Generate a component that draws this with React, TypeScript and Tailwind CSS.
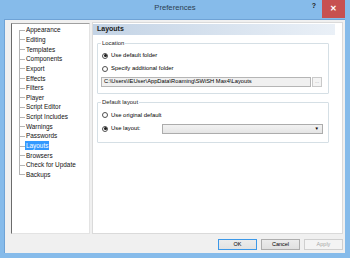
import React from "react";

const items = [
  "Appearance",
  "Editing",
  "Templates",
  "Components",
  "Export",
  "Effects",
  "Filters",
  "Player",
  "Script Editor",
  "Script Includes",
  "Warnings",
  "Passwords",
  "Layouts",
  "Browsers",
  "Check for Update",
  "Backups",
];

function Radio({ checked }: { checked?: boolean }) {
  return (
    <span className="w-[6px] h-[6px] rounded-full border border-[#505050] bg-white flex items-center justify-center shrink-0">
      {checked && <span className="w-[3px] h-[3px] rounded-full bg-[#1a1a1a]" />}
    </span>
  );
}

export default function App() {
  return (
    <div className="w-[350px] h-[258px] bg-[#86bbea] flex flex-col overflow-hidden font-['Liberation_Sans',Arial,sans-serif] text-black">
      {/* title bar */}
      <div className="h-[19px] grid grid-cols-[1fr_auto_1fr] items-start shrink-0">
        <div />
        <div className="pt-[3px] text-[7.7px] leading-[10px] text-[#2c3e50]">Preferences</div>
        <div className="flex justify-end items-start pr-[5px]">
          <span className="mt-[2px] mr-[6px] text-[7px] leading-[8px] font-bold text-[#222]">?</span>
          <div className="w-[23px] h-[18px] bg-[#c75050] flex items-center justify-center text-white text-[8px] leading-[8px] font-bold">
            ✕
          </div>
        </div>
      </div>

      {/* client area */}
      <div className="ml-[4px] mr-[5px] mb-[5px] flex-1 bg-[#f0f0f0] flex flex-col border-t border-l border-[#6fa3d6]">
        <div className="flex items-end h-[214px]">
          {/* tree */}
          <div className="ml-[6px] w-[79px] h-[211px] bg-white border-t border-l border-t-[#a0a0a0] border-l-[#6b6b6b] border-r border-b border-r-[#e3e3e3] border-b-[#e3e3e3] pt-[1px] text-[6.4px] text-[#111]">
            {items.map((it, i) => {
              const first = i === 0;
              const last = i === items.length - 1;
              const sel = it === "Layouts";
              return (
                <div key={it} className="h-[9.65px] flex items-center">
                  <div className="w-[7px] shrink-0" />
                  <div className="relative w-[6px] h-full shrink-0">
                    <div
                      className={
                        "absolute left-0 w-0 border-l border-[#b4b4b4] " +
                        (first ? "top-1/2 bottom-0" : last ? "top-0 bottom-1/2" : "top-0 bottom-0")
                      }
                    />
                    <div className="absolute left-0 right-0 top-1/2 h-0 border-t border-[#b4b4b4]" />
                  </div>
                  <span
                    className={
                      "px-[1px] leading-[9px] whitespace-nowrap " +
                      (sel ? "bg-[#3399ff] text-white" : "")
                    }
                  >
                    {it}
                  </span>
                </div>
              );
            })}
          </div>

          {/* right panel */}
          <div className="ml-[2px] w-[251px] h-[212px] bg-white border border-[#dadada] flex flex-col">
            <div className="mt-[1px] w-[242px] h-[11px] bg-gradient-to-r from-[#c3d3e5] to-[#eaf0f7] flex items-center pl-[4px] text-[7px] font-bold text-[#1a1a1a]">
              Layouts
            </div>

            <fieldset className="mt-[5px] ml-[4px] w-[232px] border border-[#d5dfe5] rounded-[1px] pl-[3px] pr-[5px] pb-[6px] text-[5.9px]">
              <legend className="px-[1px] leading-[7px] text-[#1a1a1a]">Location</legend>
              <div className="mt-[3.5px] h-[10px] flex items-center gap-[3px] pl-[1px]">
                <Radio checked />
                <span>Use default folder</span>
              </div>
              <div className="mt-[3px] h-[10px] flex items-center gap-[3px] pl-[1px]">
                <Radio />
                <span>Specify additional folder</span>
              </div>
              <div className="mt-[3px] h-[10px] flex">
                <div className="w-[210px] h-full bg-[#f0f0f0] border border-[#b5b5b5] flex items-center pl-[2px] text-[5.75px] whitespace-nowrap overflow-hidden">
                  C:\Users\IEUser\AppData\Roaming\SWiSH Max4\Layouts
                </div>
                <div className="ml-[1px] w-[10px] h-full bg-[#f4f4f4] border border-[#c9c9c9] flex items-center justify-center text-[5px] text-[#9a9a9a] leading-[5px]">
                  ...
                </div>
              </div>
            </fieldset>

            <fieldset className="mt-[5px] ml-[4px] w-[232px] border border-[#d5dfe5] rounded-[1px] pl-[3px] pr-[5px] pb-[8.5px] text-[5.9px]">
              <legend className="px-[1px] leading-[7px] text-[#1a1a1a]">Default layout</legend>
              <div className="mt-[4.8px] h-[10px] flex items-center gap-[3px] pl-[1px]">
                <Radio />
                <span>Use original default</span>
              </div>
              <div className="mt-[3.5px] h-[10px] flex items-center pl-[1px]">
                <Radio checked />
                <span className="ml-[3px] w-[51px]">Use layout:</span>
                <div className="w-[161px] h-[9.5px] bg-gradient-to-b from-[#f2f2f2] to-[#e5e5e5] border border-[#acacac] flex items-center justify-end pr-[3px]">
                  <span className="text-[4.5px] leading-[5px] text-black">▼</span>
                </div>
              </div>
            </fieldset>
          </div>
        </div>

        {/* buttons */}
        <div className="flex-1 flex justify-end items-start pt-[5px] pr-[2px] gap-[4px] text-[5.5px]">
          <div className="w-[39px] h-[11px] bg-gradient-to-b from-[#ececec] to-[#e2e2e2] border border-[#3c98e8] flex items-center justify-center">
            OK
          </div>
          <div className="w-[39px] h-[11px] bg-gradient-to-b from-[#ececec] to-[#e0e0e0] border border-[#adadad] flex items-center justify-center">
            Cancel
          </div>
          <div className="w-[39px] h-[11px] bg-[#f4f4f4] border border-[#cfcfcf] flex items-center justify-center text-[#a6a6a6]">
            Apply
          </div>
        </div>
      </div>
    </div>
  );
}
